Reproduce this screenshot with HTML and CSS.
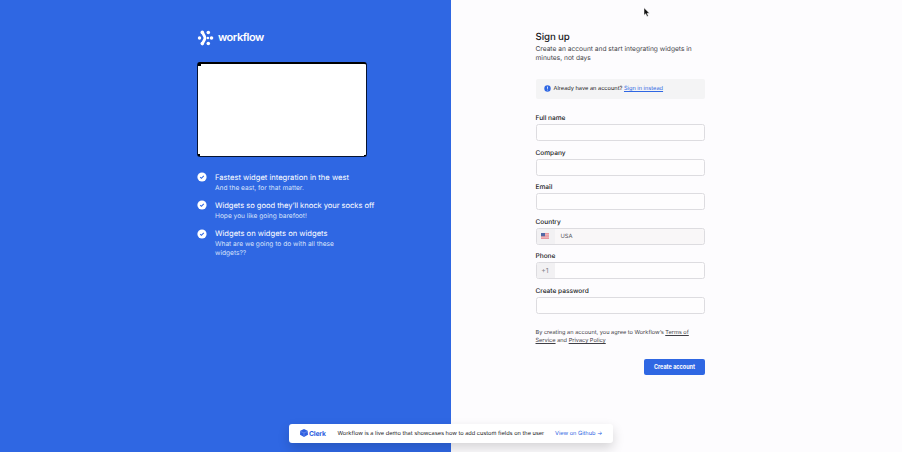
FILE: index.html
```html
<!DOCTYPE html>
<html lang="en">
<head>
<meta charset="utf-8">
<title>Workflow – Sign up</title>
<link rel="stylesheet" href="styles.css">
</head>
<body>
<div class="page">
  <section class="promo">
    <div class="brand">
      <svg class="brand-mark" viewBox="0 0 16 16" fill="#fff"><path d="M5 2.6 7 6.2Q8 8 7 9.8L5 13.4" fill="none" stroke="#fff" stroke-width="2.8" stroke-linecap="round" stroke-linejoin="round"/><circle cx="2" cy="8" r="1.7"/><circle cx="4.8" cy="2.4" r="1.8"/><circle cx="4.8" cy="13.6" r="1.8"/><circle cx="10.8" cy="2.5" r="1.8"/><circle cx="10.8" cy="13.5" r="1.8"/><circle cx="10.4" cy="8" r="1.2"/><circle cx="14" cy="8" r="1.8"/></svg>
      <span class="brand-name">workflow</span>
    </div>
    <div class="preview"></div>
    <ul class="features">
      <li><svg class="check" viewBox="0 0 10 10"><circle cx="5" cy="5" r="4.6" fill="#fff"/><path d="m3.2 5.1 1.2 1.2 2.4-2.5" fill="none" stroke="#2f67e3" stroke-width="1.1"/></svg><div><h2>Fastest widget integration in the west</h2><p>And the east, for that matter.</p></div></li>
      <li><svg class="check" viewBox="0 0 10 10"><circle cx="5" cy="5" r="4.6" fill="#fff"/><path d="m3.2 5.1 1.2 1.2 2.4-2.5" fill="none" stroke="#2f67e3" stroke-width="1.1"/></svg><div><h2 class="snug">Widgets so good they’ll knock your socks off</h2><p>Hope you like going barefoot!</p></div></li>
      <li><svg class="check" viewBox="0 0 10 10"><circle cx="5" cy="5" r="4.6" fill="#fff"/><path d="m3.2 5.1 1.2 1.2 2.4-2.5" fill="none" stroke="#2f67e3" stroke-width="1.1"/></svg><div><h2>Widgets on widgets on widgets</h2><p>What are we going to do with all these<br>widgets??</p></div></li>
    </ul>
  </section>
  <main class="signup">
    <h1>Sign up</h1>
    <p class="intro">Create an account and start integrating widgets in<br>minutes, not days</p>
    <div class="notice">
      <svg class="info" viewBox="0 0 7 7"><circle cx="3.5" cy="3.5" r="3.2" fill="#2f67e3"/><path d="M3.5 1.6v2.2M3.5 4.7v.7" stroke="#fff" stroke-width=".8"/></svg>
      <span>Already have an account? <a href="#">Sign in instead</a></span>
    </div>
    <form class="form">
      <div class="field"><label>Full name</label><div class="input"></div></div>
      <div class="field"><label>Company</label><div class="input"></div></div>
      <div class="field"><label>Email</label><div class="input"></div></div>
      <div class="field"><label>Country</label><div class="input locked"><span class="prefix"><svg class="flag" viewBox="0 0 8 6"><path fill="#f3c8cc" d="M0 0h8v6H0z"/><path d="M0 .6h8M0 2.2h8M0 3.8h8M0 5.4h8" stroke="#e3848d" stroke-width=".8"/><path fill="#5268a5" d="M0 0h4v3.2H0z"/></svg></span><span class="value">USA</span></div></div>
      <div class="field"><label>Phone</label><div class="input"><span class="prefix dial">+1</span></div></div>
      <div class="field"><label>Create password</label><div class="input"></div></div>
      <p class="terms">By creating an account, you agree to Workflow’s <a href="#">Terms of</a><br><a href="#">Service</a> and <a href="#">Privacy Policy</a></p>
      <button class="submit" type="button">Create account</button>
    </form>
  </main>
  <aside class="banner">
    <svg class="clerk-mark" viewBox="0 0 8 8"><path d="M4 0 7.6 1.8 8 5.8 4 8 0 5.8.3 1.8z" fill="#2f5fe0"/><path d="m.7 2.5 3.2 1.4 3.4-1.4M4 4v3.4" fill="none" stroke="#7fa0f2" stroke-width=".6"/></svg>
    <span class="clerk-name">Clerk</span>
    <span class="message">Workflow is a live demo that showcases how to add custom fields on the user</span>
    <a class="github" href="#">View on Github <span>→</span></a>
  </aside>
  <svg class="pointer" viewBox="0 0 8 11"><path d="M1 .8v7.4l1.7-1.5 1.3 2.8 1.3-.6-1.2-2.6h2.4z" fill="#111" stroke="#fff" stroke-width=".5"/></svg>
</div>
</body>
</html>
```
FILE: styles.css
```css
* { box-sizing: border-box; margin: 0; padding: 0; }
body { font-family: Inter, "Liberation Sans", sans-serif; background: #fdfcfe; text-rendering: geometricPrecision; }
.page { position: relative; display: grid; grid-template-columns: 451px 451px; height: 452px; overflow: hidden; }

.promo { background: #2f67e3; color: #fff; padding: 29px 0 0 197px; }
.brand { display: flex; align-items: center; height: 17px; gap: 4px; }
.brand-mark { width: 17px; height: 16px; }
.brand-name { font-size: 11px; font-weight: 600; letter-spacing: -.45px; line-height: 17px; }
.preview { position: relative; width: 170px; height: 95px; margin-top: 16px; background: #fff; border: 1px solid #071431; border-top: 2px solid #000; border-radius: 3px; }
.preview::before, .preview::after { content: ""; position: absolute; bottom: 0; width: 2px; height: 2px; background: #000; }
.preview::before { left: 0; box-shadow: 0 -2px #fff, 0 -90px #000, 1px -90px #000; }
.preview::after { right: 0; height: 1px; }
.features { list-style: none; margin-top: 15px; }
.features li { display: flex; gap: 8px; min-height: 28.2px; }
.check { flex: none; width: 10px; height: 10px; margin-top: .3px; }
.features h2 { font-size: 7.6px; font-weight: 400; line-height: 11px; white-space: nowrap; }
.features .snug { letter-spacing: -.045px; }
.features p { margin-top: .5px; font-size: 6.6px; line-height: 9.5px; color: #d6e1fa; }

.signup { width: 254px; padding: 32px 0 0 84.5px; color: #18181b; white-space: nowrap; }
h1 { font-size: 9.7px; font-weight: 500; line-height: 12px; letter-spacing: -.1px; }
.intro { font-size: 6.63px; line-height: 9.4px; margin-top: 1px; color: #3f3f46; }
.notice { display: flex; align-items: center; gap: 3px; height: 20px; margin-top: 15px; padding-left: 8px; border-radius: 2px; background: #f4f4f5; font-size: 5.65px; }
.info { width: 7px; height: 7px; }
.notice span { padding-top: .5px; }
.notice a { color: #2f67e3; }
.form { display: flex; flex-direction: column; margin-top: 15.4px; }
.field { height: 34.55px; }
label { display: block; font-size: 6.55px; font-weight: 500; line-height: 9px; }
.input { display: flex; align-items: center; height: 17px; margin-top: 1px; border: 1px solid #dddce0; border-radius: 2.5px; background: #fefdfe; overflow: hidden; font-size: 5.8px; color: #52525b; }
.locked { background: #f9f7f8; }
.prefix { display: flex; align-items: center; justify-content: center; width: 18px; height: 100%; padding-right: 1px; background: #f2f1f3; color: #85858c; }
.dial { font-size: 6.8px; }
.flag { width: 8px; height: 6px; }
.value { margin-left: 6px; }
.terms { margin-top: 9px; font-size: 5.62px; line-height: 7.7px; color: #3f3f46; }
.terms a { color: inherit; }
.submit { align-self: flex-end; width: 61px; height: 16px; margin-top: 13px; border: 0; border-radius: 2px; background: #2f67e3; color: #fff; font: 700 5.5px Inter, sans-serif; }

.banner { position: absolute; left: 289px; top: 424px; display: flex; align-items: center; width: 324px; height: 18.5px; padding-left: 11px; border-radius: 3px; background: #fff; box-shadow: 0 5px 12px rgba(0, 0, 0, .16); font-size: 5.65px; color: #18181b; white-space: nowrap; }
.clerk-mark { width: 8px; height: 8px; }
.clerk-name { width: 28.5px; margin-left: 1px; font-size: 6.8px; font-weight: 700; letter-spacing: -.2px; color: #2f5fe0; }
.message { width: 217.5px; padding-top: 1px; }
.github { padding-top: 1px; color: #2f67e3; text-decoration: none; }
.github span { margin-left: 0; }
.pointer { position: absolute; left: 643px; top: 7px; width: 8px; height: 11px; }
```
